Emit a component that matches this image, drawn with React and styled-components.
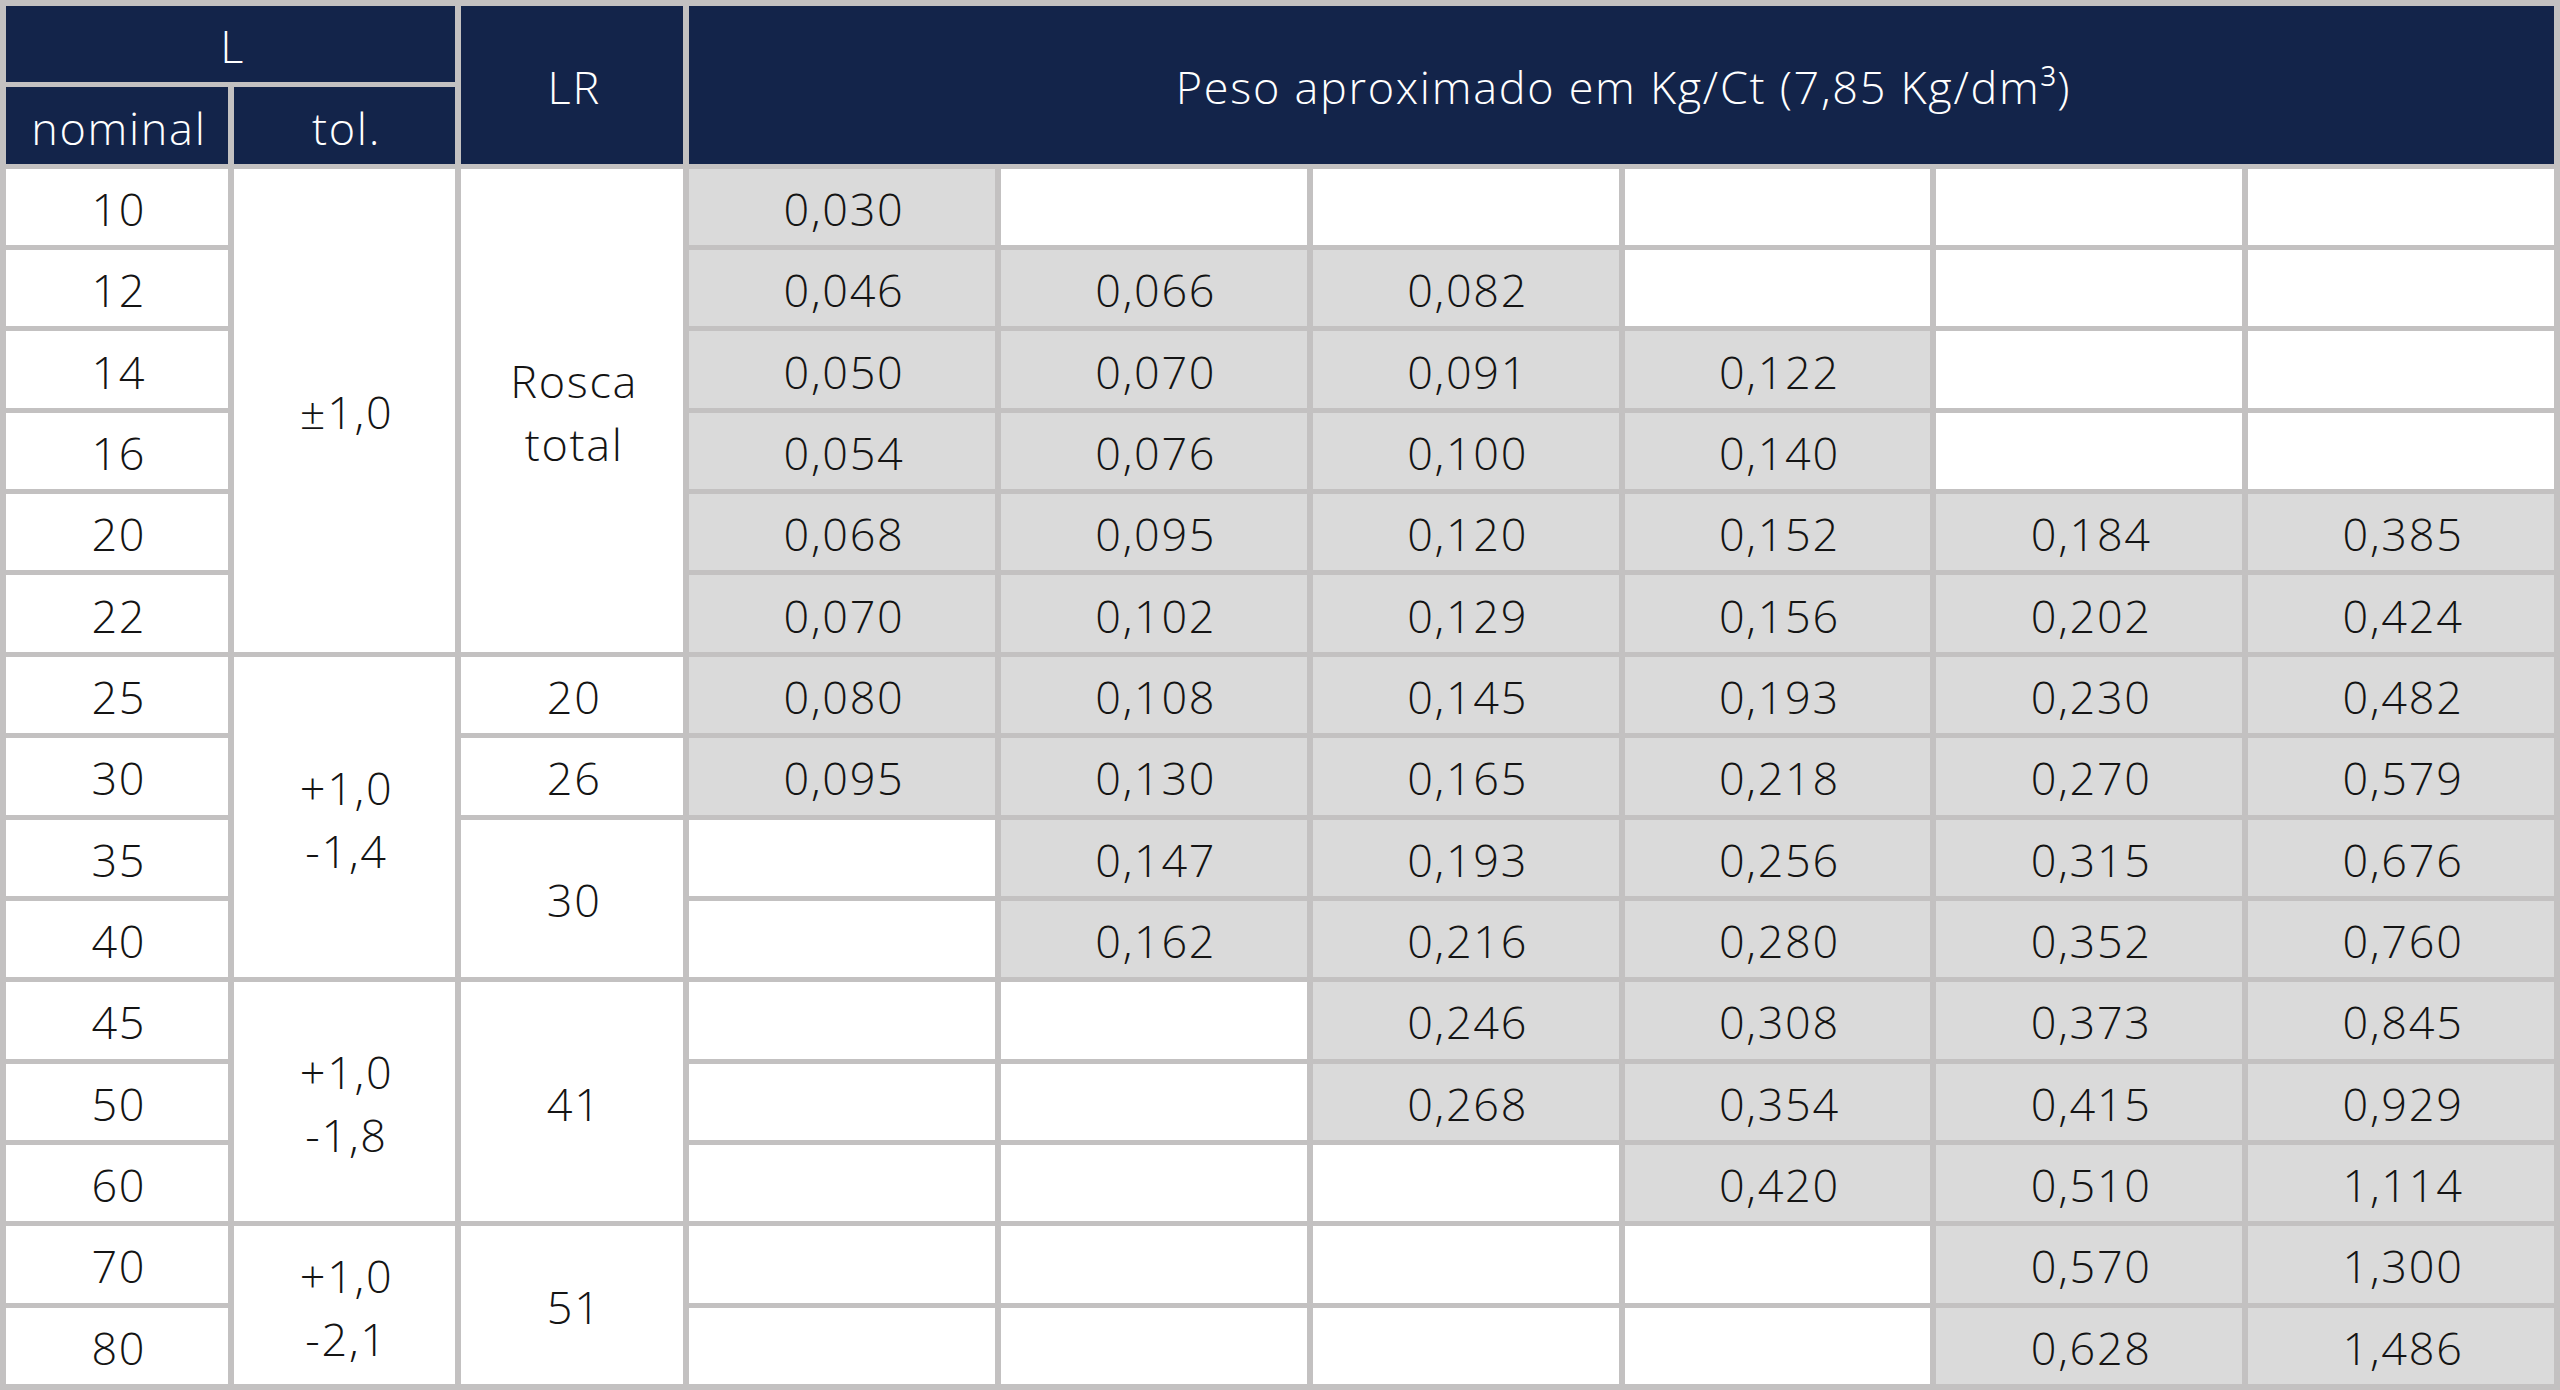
import React from "react";
import styled, { createGlobalStyle } from "styled-components";

const colors = {
  navy: "#13244a",
  line: "#c3c1c1",
  shade: "#dadada",
  text: "#141414",
};

const GlobalStyle = createGlobalStyle`
  html, body {
    margin: 0;
    padding: 0;
    background: ${colors.line};
  }
  * {
    box-sizing: border-box;
  }
`;

const Page = styled.div`
  height: 100vh;
  padding: 6px 6px 6px 6px;
  font-family: "Open Sans", "Noto Sans", sans-serif;
  font-weight: 300;
`;

const Table = styled.div`
  display: grid;
  height: 100%;
  grid-template-columns: repeat(3, 221.7px) repeat(6, 1fr);
  grid-template-rows: repeat(17, 1fr);
  column-gap: 6px;
  row-gap: 5px;
`;

const Cell = styled.div`
  grid-column: ${(p) => p.$col} / span ${(p) => p.$colSpan || 1};
  grid-row: ${(p) => p.$row} / span ${(p) => p.$rowSpan || 1};
  display: flex;
  flex-direction: column;
  align-items: center;
  justify-content: center;
  padding: 3px 0 0 4px;
  background: ${(p) => (p.$shade ? colors.shade : "#ffffff")};
  color: ${colors.text};
  font-size: 45px;
  line-height: 63px;
  letter-spacing: 1.7px;
  white-space: nowrap;
`;

const HeadCell = styled(Cell)`
  background: ${colors.navy};
  color: #ffffff;
`;

// L, tol / LR groups and the weights per diameter column
const rows = [
  ["10", ["0,030", "", "", "", "", ""]],
  ["12", ["0,046", "0,066", "0,082", "", "", ""]],
  ["14", ["0,050", "0,070", "0,091", "0,122", "", ""]],
  ["16", ["0,054", "0,076", "0,100", "0,140", "", ""]],
  ["20", ["0,068", "0,095", "0,120", "0,152", "0,184", "0,385"]],
  ["22", ["0,070", "0,102", "0,129", "0,156", "0,202", "0,424"]],
  ["25", ["0,080", "0,108", "0,145", "0,193", "0,230", "0,482"]],
  ["30", ["0,095", "0,130", "0,165", "0,218", "0,270", "0,579"]],
  ["35", ["", "0,147", "0,193", "0,256", "0,315", "0,676"]],
  ["40", ["", "0,162", "0,216", "0,280", "0,352", "0,760"]],
  ["45", ["", "", "0,246", "0,308", "0,373", "0,845"]],
  ["50", ["", "", "0,268", "0,354", "0,415", "0,929"]],
  ["60", ["", "", "", "0,420", "0,510", "1,114"]],
  ["70", ["", "", "", "", "0,570", "1,300"]],
  ["80", ["", "", "", "", "0,628", "1,486"]],
];

const tolGroups = [
  { start: 0, span: 6, lines: ["±1,0"] },
  { start: 6, span: 4, lines: ["+1,0", "-1,4"] },
  { start: 10, span: 3, lines: ["+1,0", "-1,8"] },
  { start: 13, span: 2, lines: ["+1,0", "-2,1"] },
];

const lrGroups = [
  { start: 0, span: 6, lines: ["Rosca", "total"] },
  { start: 6, span: 1, lines: ["20"] },
  { start: 7, span: 1, lines: ["26"] },
  { start: 8, span: 2, lines: ["30"] },
  { start: 10, span: 3, lines: ["41"] },
  { start: 13, span: 2, lines: ["51"] },
];

const BODY_START = 3;

const GroupCell = ({ col, group }) => (
  <Cell $col={col} $row={BODY_START + group.start} $rowSpan={group.span}>
    {group.lines.map((line) => (
      <span key={line}>{line}</span>
    ))}
  </Cell>
);

export default function App() {
  return (
    <Page>
      <GlobalStyle />
      <Table>
        <HeadCell $col={1} $row={1} $colSpan={2}>L</HeadCell>
        <HeadCell $col={1} $row={2}>nominal</HeadCell>
        <HeadCell $col={2} $row={2}>tol.</HeadCell>
        <HeadCell $col={3} $row={1} $rowSpan={2}>LR</HeadCell>
        <HeadCell $col={4} $row={1} $colSpan={6} $rowSpan={2}>
          Peso aproximado em Kg/Ct (7,85 Kg/dm³)
        </HeadCell>

        {rows.map(([nominal, values], i) => (
          <React.Fragment key={nominal}>
            <Cell $col={1} $row={BODY_START + i}>{nominal}</Cell>
            {values.map((v, j) => (
              <Cell key={j} $col={4 + j} $row={BODY_START + i} $shade={v !== ""}>
                {v}
              </Cell>
            ))}
          </React.Fragment>
        ))}

        {tolGroups.map((g) => (
          <GroupCell key={"tol" + g.start} col={2} group={g} />
        ))}
        {lrGroups.map((g) => (
          <GroupCell key={"lr" + g.start} col={3} group={g} />
        ))}
      </Table>
    </Page>
  );
}
